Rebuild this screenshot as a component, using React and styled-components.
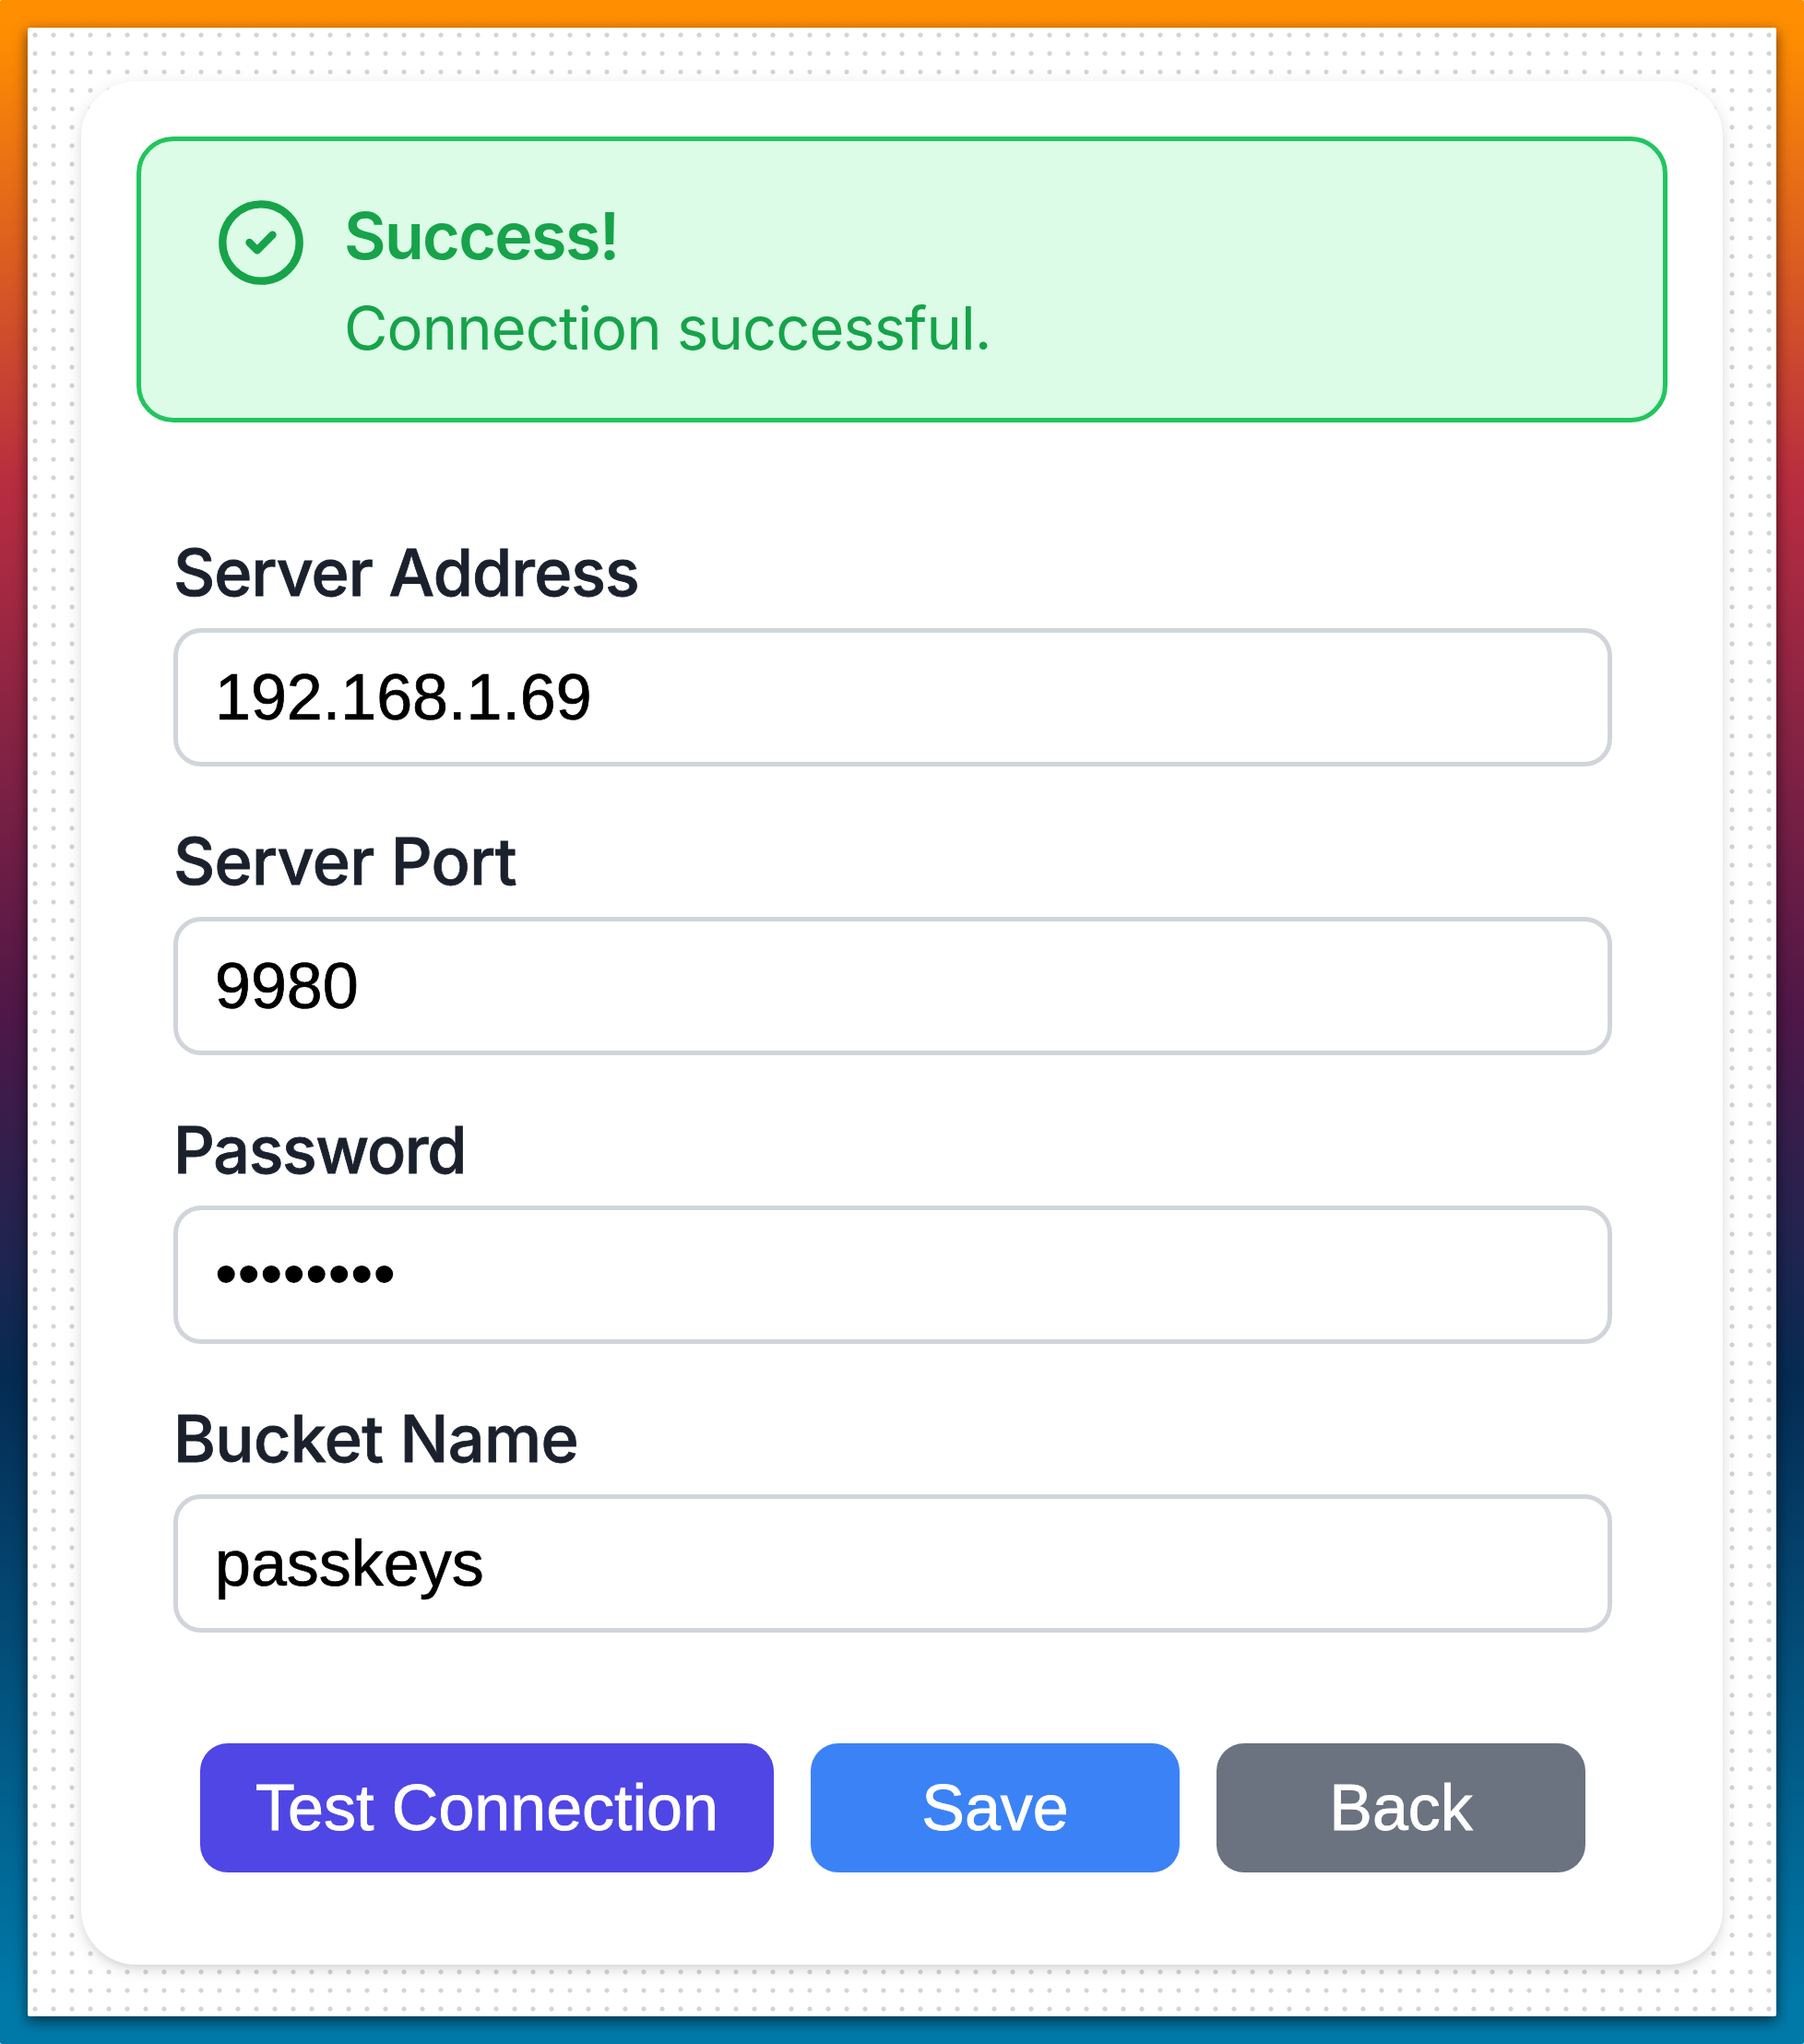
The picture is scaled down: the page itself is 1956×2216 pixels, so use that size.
import React from "react";
import styled, { createGlobalStyle } from "styled-components";
import { CircleCheck } from "lucide-react";

const GlobalStyle = createGlobalStyle`
  *, *::before, *::after { box-sizing: border-box; }
  body { margin: 0; background: #fff; }
`;

const Backdrop = styled.div`
  width: 1956px;
  height: 2216px;
  padding: 30px;
  display: flex;
  border-radius: 2px;
  background: linear-gradient(
    180deg,
    #ff8f00 0%,
    #fe8c02 2%,
    #b92d40 23.5%,
    #4f1748 49.5%,
    #052b53 67.5%,
    #0079a9 98%,
    #0079a9 100%
  );
`;

const Canvas = styled.main`
  flex: 1;
  display: flex;
  padding: 58px 58px 56px;
  border-radius: 2px;
  background-color: #fff;
  background-image: radial-gradient(circle at 8px 8px, #d1d5db 2.1px, transparent 3px);
  background-size: 20px 20px;
  box-shadow: 0 5px 15px rgba(0, 0, 0, 0.6);
`;

const Card = styled.section`
  flex: 1;
  display: flex;
  flex-direction: column;
  padding: 60px;
  border-radius: 60px;
  background: #fff;
  box-shadow: 0 5px 20px rgba(0, 0, 0, 0.11), 0 5px 10px -2px rgba(0, 0, 0, 0.09);
`;

const Alert = styled.div`
  display: flex;
  gap: 40px;
  height: 310px;
  padding: 60px 80px;
  border: 5px solid #22c55e;
  border-radius: 40px;
  background: #dcfce7;
  color: #16a34a;
  font-family: Inter, "Liberation Sans", sans-serif;
`;

const AlertIcon = styled(CircleCheck)`
  flex: none;
  width: 100px;
  height: 100px;
`;

const AlertTitle = styled.div`
  font-size: 70px;
  font-weight: 600;
  line-height: 100px;
  letter-spacing: -1.65px;
  margin-top: -7px;
  white-space: nowrap;
`;

const AlertText = styled.div`
  font-size: 65px;
  font-weight: 400;
  line-height: 100px;
  letter-spacing: -0.9px;
  white-space: nowrap;
`;

const Form = styled.form`
  display: flex;
  flex-direction: column;
  gap: 53px;
  padding: 113px 60px 0 40px;
`;

const Field = styled.div`
  display: flex;
  flex-direction: column;
  gap: 10px;
`;

const Label = styled.label`
  height: 100px;
  line-height: 100px;
  font-family: Inter, "Liberation Sans", sans-serif;
  font-size: 70px;
  font-weight: 500;
  letter-spacing: ${(p) => p.$tracking}px;
  color: #1a202c;
  -webkit-text-stroke: 0.8px currentColor;
  white-space: nowrap;
`;

const Input = styled.input`
  width: 100%;
  height: 150px;
  padding: 0 40px;
  border: 5px solid #d1d5db;
  border-radius: 30px;
  outline: none;
  background: #fff;
  color: #000;
  font-family: "Liberation Sans", Arial, sans-serif;
  font-size: 70px;
  ${(p) =>
    p.type === "password"
      ? "padding-bottom: 2px;"
      : "-webkit-text-stroke: 0.7px currentColor;"}
`;

const Actions = styled.div`
  display: flex;
  justify-content: center;
  gap: 40px;
  padding-top: 67px;
`;

const Button = styled.button`
  width: ${(p) => p.$width}px;
  height: 140px;
  padding: 0;
  border: 0;
  border-radius: 30px;
  background: ${(p) => p.$color};
  color: #fff;
  font-family: "Liberation Sans", Arial, sans-serif;
  font-size: 70px;
  line-height: 140px;
  white-space: nowrap;
  -webkit-text-stroke: 0.8px currentColor;
`;

const fields = [
  { id: "address", label: "Server Address", value: "192.168.1.69", tracking: -0.95 },
  { id: "port", label: "Server Port", value: "9980", tracking: -0.65 },
  { id: "password", label: "Password", value: "passkeys", type: "password", tracking: -1.35 },
  { id: "bucket", label: "Bucket Name", value: "passkeys", tracking: -0.6 },
];

export default function App() {
  return (
    <>
      <GlobalStyle />
      <Backdrop>
        <Canvas>
          <Card>
            <Alert role="status">
              <AlertIcon />
              <div>
                <AlertTitle>Success!</AlertTitle>
                <AlertText>Connection successful.</AlertText>
              </div>
            </Alert>
            <Form onSubmit={(e) => e.preventDefault()}>
              {fields.map((f) => (
                <Field key={f.id}>
                  <Label htmlFor={f.id} $tracking={f.tracking}>{f.label}</Label>
                  <Input id={f.id} type={f.type || "text"} defaultValue={f.value} spellCheck={false} />
                </Field>
              ))}
              <Actions>
                <Button type="button" $width={622} $color="#4f46e5">Test Connection</Button>
                <Button type="submit" $width={400} $color="#3b82f6">Save</Button>
                <Button type="button" $width={400} $color="#6b7280">Back</Button>
              </Actions>
            </Form>
          </Card>
        </Canvas>
      </Backdrop>
    </>
  );
}
